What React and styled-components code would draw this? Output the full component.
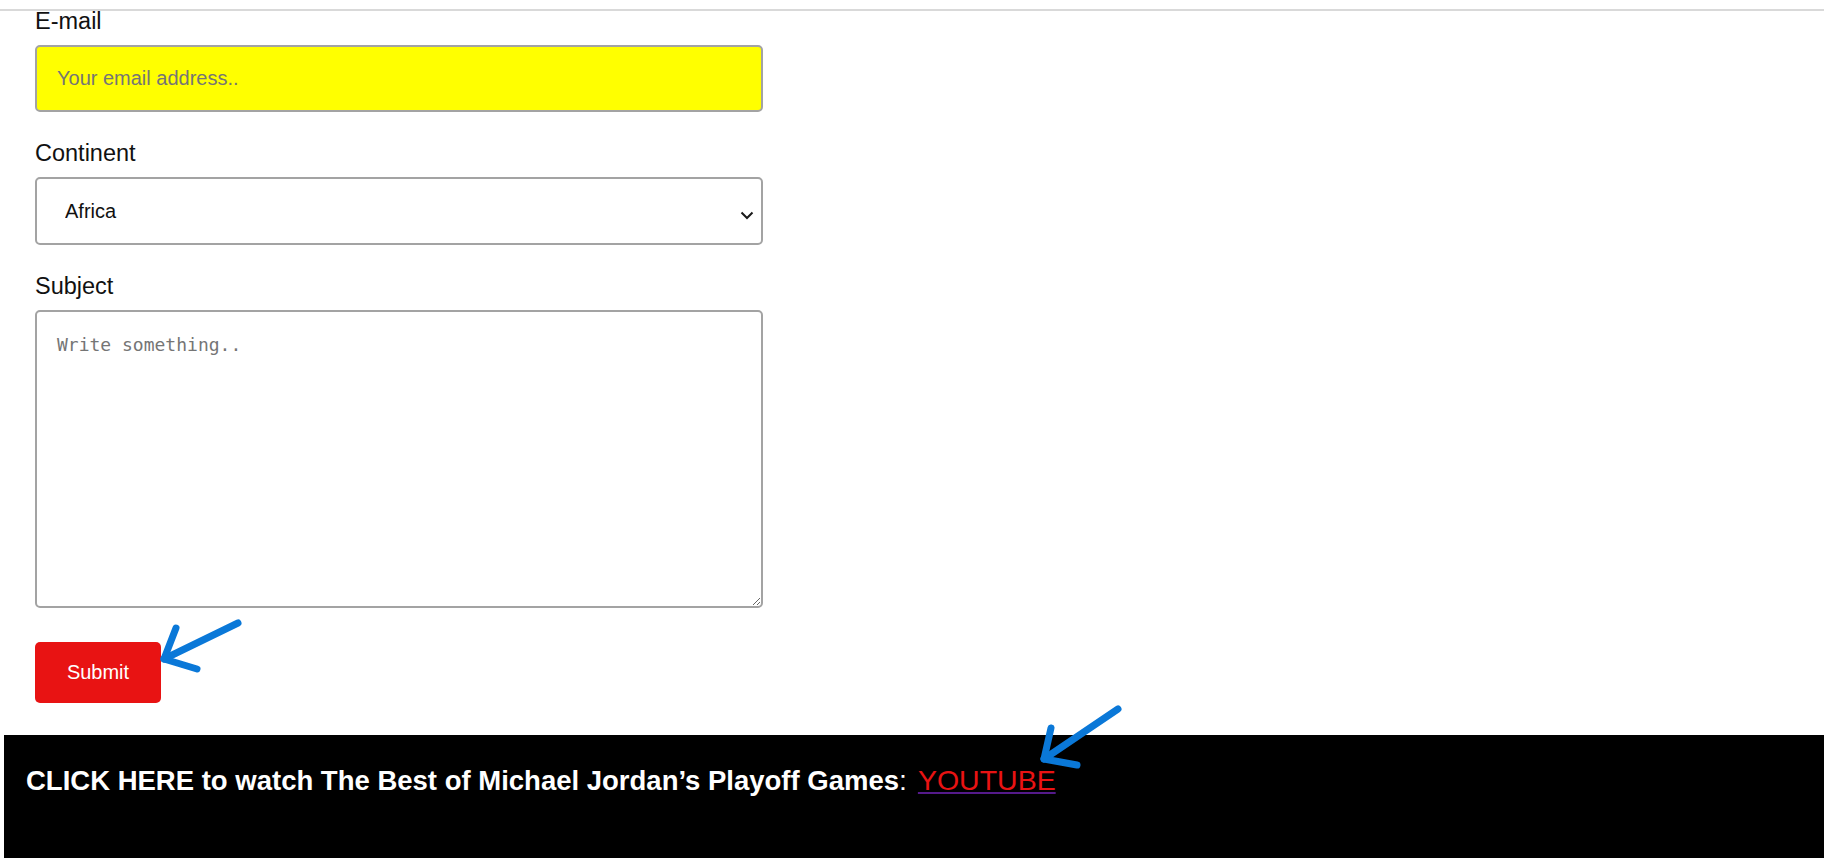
import React from "react";
import styled, { createGlobalStyle } from "styled-components";

const GlobalStyle = createGlobalStyle`
  html, body {
    margin: 0;
    padding: 0;
    background: #ffffff;
    overflow: hidden;
  }
  body {
    font-family: "Liberation Sans", Arial, sans-serif;
  }
`;

const Page = styled.div`
  position: relative;
  width: 1824px;
  height: 858px;
  overflow: hidden;
`;

const TopRule = styled.div`
  margin-top: 9px;
  height: 2px;
  background: #d9d9d9;
`;

const Form = styled.form`
  display: flex;
  flex-direction: column;
  align-items: flex-start;
  width: 728px;
  margin-left: 35px;
`;

const Label = styled.label`
  display: block;
  margin-top: ${(p) => (p.$first ? "0" : "31px")};
  font-family: "Liberation Sans", Arial, sans-serif;
  font-size: 23.5px;
  line-height: 20px;
  color: #111;
`;

const fieldBase = `
  box-sizing: border-box;
  width: 728px;
  margin: 14px 0 0 0;
  border: 2px solid #a3a3a3;
  border-radius: 5px;
  outline: none;
  color: #111;
`;

const TextInput = styled.input`
  ${fieldBase}
  padding: 20px;
  background: ${(p) => p.$bg || "#ffffff"};
  font-family: "Liberation Sans", Arial, sans-serif;
  font-size: 20px;
  line-height: 23px;
  &::placeholder {
    color: #757575;
  }
`;

const SelectWrap = styled.div`
  position: relative;
  width: 728px;
`;

const Select = styled.select`
  ${fieldBase}
  display: block;
  height: 68px;
  padding: 0 28px;
  appearance: none;
  -webkit-appearance: none;
  background: #ffffff;
  font-family: "Liberation Sans", Arial, sans-serif;
  font-size: 20px;
`;

const Chevron = styled.svg`
  position: absolute;
  right: 9px;
  top: 47px;
  width: 14px;
  height: 10px;
  pointer-events: none;
`;

const TextArea = styled.textarea`
  ${fieldBase}
  display: block;
  height: 298px;
  padding: 22px 20px;
  resize: vertical;
  background: #ffffff;
  font-family: "DejaVu Sans Mono", "Liberation Mono", monospace;
  font-size: 18px;
  &::placeholder {
    color: #757575;
  }
`;

const SubmitButton = styled.button`
  margin-top: 34px;
  width: 126px;
  height: 61px;
  padding: 0;
  border: none;
  border-radius: 5px;
  background: #e81313;
  color: #ffffff;
  font-family: "Liberation Sans", Arial, sans-serif;
  font-size: 20px;
  cursor: pointer;
`;

const Footer = styled.footer`
  box-sizing: border-box;
  margin: 32px 0 0 4px;
  height: 124px;
  padding: 29px 22px 0;
  background: #000000;
  overflow: hidden;
`;

const FooterText = styled.p`
  margin: 0;
  font-family: "Liberation Sans", Arial, sans-serif;
  font-size: 27.5px;
  line-height: normal;
  color: #ffffff;
  white-space: nowrap;
`;

const Strong = styled.strong`
  font-weight: 700;
`;

const Tail = styled.span`
  font-size: 28.5px;
`;

const VideoLink = styled.a`
  margin-left: 3px;
  color: #551a8b;
  text-decoration: underline;
`;

const LinkLabel = styled.span`
  color: #e81313;
`;

const ArrowSvg = styled.svg`
  position: absolute;
  overflow: visible;
  pointer-events: none;
`;

function Arrow({ left, top, tail, tip, wingA, wingB }) {
  const rel = (p) => `${p[0] - left},${p[1] - top}`;
  return (
    <ArrowSvg
      width="100"
      height="80"
      style={{ left, top }}
      viewBox="0 0 100 80"
    >
      <g
        fill="none"
        stroke="#0a78d8"
        strokeWidth="7"
        strokeLinecap="round"
        strokeLinejoin="round"
      >
        <path d={`M${rel(tail)} L${rel(tip)}`} />
        <path d={`M${rel(wingA)} L${rel(tip)} L${rel(wingB)}`} />
      </g>
    </ArrowSvg>
  );
}

export default function App() {
  return (
    <>
      <GlobalStyle />
      <Page>
        <TopRule />
        <Form onSubmit={(e) => e.preventDefault()}>
          <Label $first htmlFor="email">E-mail</Label>
          <TextInput
            id="email"
            type="text"
            $bg="#ffff00"
            placeholder="Your email address.."
          />

          <Label htmlFor="continent">Continent</Label>
          <SelectWrap>
            <Select id="continent" defaultValue="africa">
              <option value="africa">Africa</option>
              <option value="asia">Asia</option>
              <option value="europe">Europe</option>
              <option value="namerica">North America</option>
              <option value="samerica">South America</option>
              <option value="oceania">Oceania</option>
            </Select>
            <Chevron viewBox="0 0 14 10">
              <path
                d="M1.5 2.5 L7 8 L12.5 2.5"
                fill="none"
                stroke="#1a1a1a"
                strokeWidth="2"
              />
            </Chevron>
          </SelectWrap>

          <Label htmlFor="subject">Subject</Label>
          <TextArea id="subject" placeholder="Write something.." />

          <SubmitButton type="submit">Submit</SubmitButton>
        </Form>

        <Footer>
          <FooterText>
            <Strong>
              CLICK HERE to watch The Best of Michael Jordan’s Playoff Games
            </Strong>
            <Tail>
              :{" "}
              <VideoLink href="#youtube">
                <LinkLabel>YOUTUBE</LinkLabel>
              </VideoLink>
            </Tail>
          </FooterText>
        </Footer>

        <Arrow
          left={150}
          top={610}
          tail={[238, 623]}
          tip={[164, 659]}
          wingA={[176, 628]}
          wingB={[197, 669]}
        />
        <Arrow
          left={1030}
          top={700}
          tail={[1118, 709]}
          tip={[1044, 759]}
          wingA={[1051, 728]}
          wingB={[1077, 765]}
        />
      </Page>
    </>
  );
}
